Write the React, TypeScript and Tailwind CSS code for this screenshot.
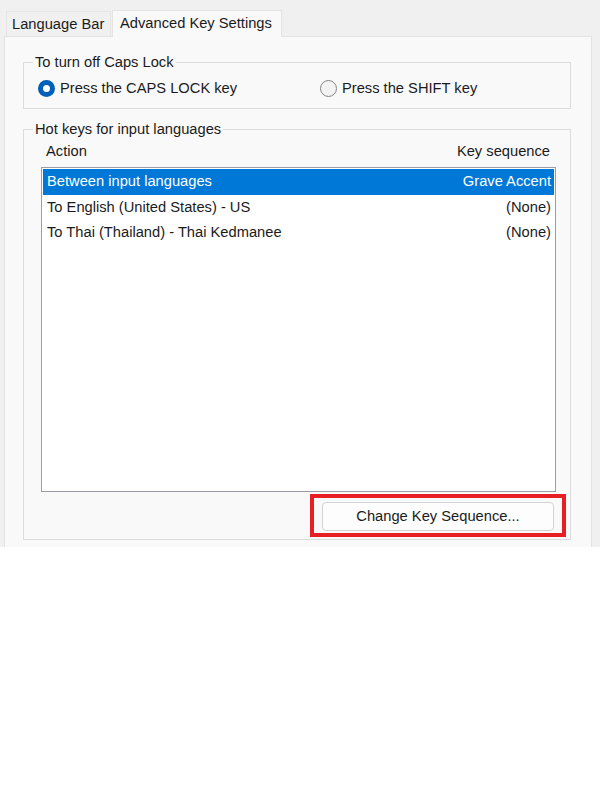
import { useState } from "react";

const rows = [
  { action: "Between input languages", keys: "Grave Accent" },
  { action: "To English (United States) - US", keys: "(None)" },
  { action: "To Thai (Thailand) - Thai Kedmanee", keys: "(None)" },
];

function Radio({ checked, label }: { checked: boolean; label: string }) {
  return (
    <div className="flex items-center gap-[5px]">
      {checked ? (
        <span className="w-[17px] h-[17px] rounded-full bg-[#005fb8] flex items-center justify-center">
          <span className="w-[7px] h-[7px] rounded-full bg-white" />
        </span>
      ) : (
        <span className="w-[17px] h-[17px] rounded-full border-[1.5px] border-[#858585] bg-[#f3f3f3]" />
      )}
      <span>{label}</span>
    </div>
  );
}

export default function App() {
  const [selected, setSelected] = useState(0);

  return (
    <div
      className="w-[600px] h-[800px] bg-white text-[#1b1b1b] text-[14.7px] leading-[17px]"
      style={{ fontFamily: '"Liberation Sans", Arial, sans-serif' }}
    >
      <div className="bg-[#f0f0f0] h-[547px] flex flex-col">
        {/* tabs */}
        <div className="h-[36px] flex items-end pl-[6px]">
          <div className="w-[105px] h-[25px] border border-b-0 border-[#e6e6e6] bg-[#f0f0f0] pl-[5px] flex items-center">
            Language Bar
          </div>
          <div className="relative z-10 w-[170px] h-[27px] -mb-px ml-px border border-b-0 border-[#e3e3e3] bg-[#f9f9f9] pl-[7px] pb-[2px] flex items-center">
            Advanced Key Settings
          </div>
        </div>

        {/* panel */}
        <div className="ml-[4px] w-[588px] flex-1 bg-[#f9f9f9] border border-b-0 border-[#e3e3e3] pt-[17px]">
          <fieldset className="ml-[18px] w-[548px] border border-[#dcdcdc] px-[14px] pt-[7px] pb-[10px]">
            <legend className="ml-[-5px] px-[2px]">To turn off Caps Lock</legend>
            <div className="flex h-[20px] items-center">
              <div className="w-[282px]">
                <Radio checked label="Press the CAPS LOCK key" />
              </div>
              <Radio checked={false} label="Press the SHIFT key" />
            </div>
          </fieldset>

          <fieldset className="ml-[18px] mt-[12px] w-[548px] border border-[#dcdcdc] pt-[5px] pb-[2px]">
            <legend className="ml-[9px] px-[2px]">Hot keys for input languages</legend>
            <div className="flex justify-between pl-[22px] pr-[20px]">
              <span>Action</span>
              <span>Key sequence</span>
            </div>
            <div className="mt-[7px] ml-[17px] w-[515px] h-[325px] border border-[#9c9ca6] bg-white p-px">
              {rows.map((r, i) => (
                <div
                  key={r.action}
                  onClick={() => setSelected(i)}
                  className={
                    "h-[25.5px] flex items-center justify-between pl-[4px] pr-[3px] " +
                    (selected === i ? "bg-[#0078d7] text-white" : "")
                  }
                >
                  <span>{r.action}</span>
                  <span>{r.keys}</span>
                </div>
              ))}
            </div>
            <div className="flex justify-end pr-[4px] mt-[2px]">
              <div className="border-4 border-[#e81e25] pl-[8px] pr-[8px] pt-[4px] pb-[2px]">
                <button className="w-[232px] h-[29px] bg-[#fdfdfd] border border-[#d3d3d3] rounded-[4px] flex items-center justify-center">
                  Change Key Sequence...
                </button>
              </div>
            </div>
          </fieldset>
        </div>
      </div>
    </div>
  );
}
